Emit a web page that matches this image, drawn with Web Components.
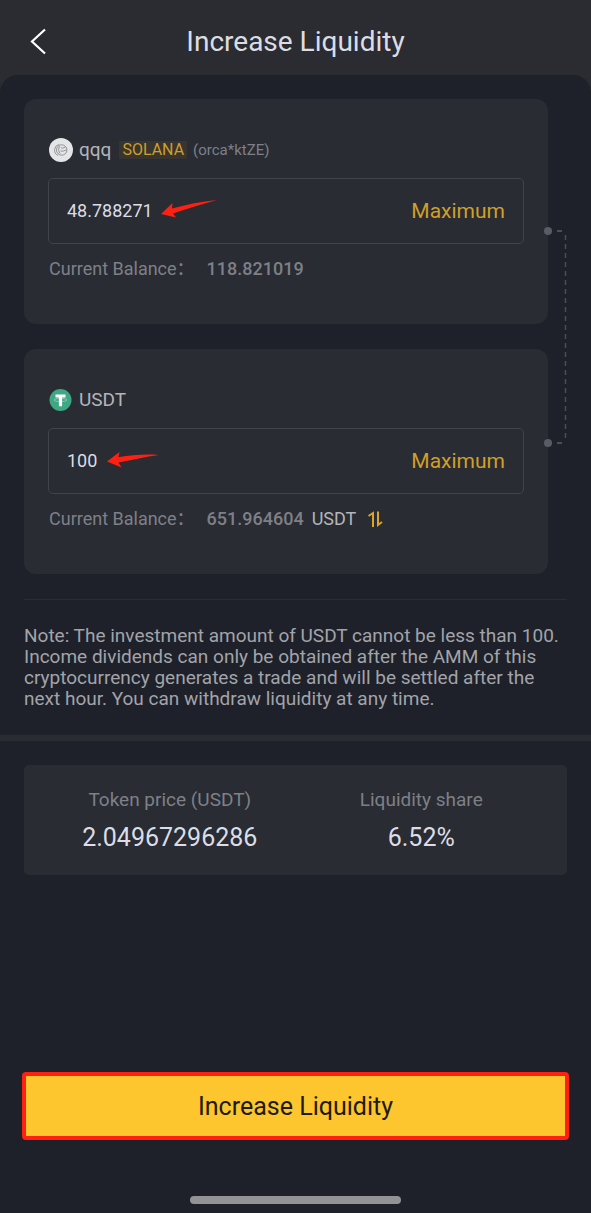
<!DOCTYPE html>
<html lang="en">
<head>
<meta charset="utf-8">
<meta name="viewport" content="width=device-width, initial-scale=1">
<title>Increase Liquidity</title>
<style>
  html, body { margin: 0; background: #1e2129; }
  body { font-family: Roboto, "Noto Sans CJK SC", sans-serif; color: #dcdde3; }
</style>
</head>
<body>
<liquidity-page></liquidity-page>

<template id="t-page">
  <style>
    :host { display: flex; flex-direction: column; min-height: 100vh; background: #2b2c31; }
    main { flex: 1; display: flex; flex-direction: column; background: #1e2129; border-radius: 18px 18px 0 0; padding-top: 24px; }
    .pair { position: relative; display: flex; flex-direction: column; gap: 25px; margin: 0 24px; padding-right: 19px; }
    pair-connector { position: absolute; right: 0; top: 127px; }
    hr { height: 1px; border: 0; margin: 25px 24px; background: #2a2d34; }
    .note { margin: 0 24px; font-size: 19px; line-height: 21px; color: #a2a4aa; }
    .band { height: 6px; margin: 26px 0 24px; background: #292c33; }
    .stats { display: flex; margin: 0 24px; padding: 20px; background: #292c33; border-radius: 5px; }
    stat-item { flex: 1; }
    footer { margin-top: auto; padding: 24px 22px 9px; display: flex; flex-direction: column; align-items: center; gap: 56px; }
    action-button { align-self: stretch; }
    .home { width: 39%; min-width: 120px; max-width: 211px; height: 8px; border-radius: 4px; background: #919394; }
  </style>
  <title-bar>Increase Liquidity</title-bar>
  <main>
    <div class="pair">
      <token-card name="qqq" chain="SOLANA" address="(orca*ktZE)" amount="48.788271" balance="118.821019">
        <svg slot="icon" width="24" height="24" viewBox="0 0 24 24" aria-hidden="true">
          <circle cx="12" cy="12" r="12" fill="#e4e5e7"/>
          <g fill="none" stroke="#7c8086" stroke-width=".8">
            <circle cx="12.700" cy="12" r="5.200"/>
            <path d="M10.300 6.400A5.800 5.800 0 0 0 9 17.400M10.500 8.300c-1.400 2.400-1 5.600.8 7.300M11.800 9.700l1.500.6 3-1.200M11.500 13l2.800.1 3-1.300"/>
          </g>
        </svg>
        <svg slot="mark" width="56" height="20" viewBox="0 0 56 20" aria-hidden="true">
          <path fill="#ff2011" d="M0 14 11.500 3 11 8.600C26 4.500 40 1.500 56 0 41 4.500 26 8.600 12 13.500L15 17.500Z"/>
        </svg>
      </token-card>
      <token-card name="USDT" amount="100" balance="651.964604" unit="USDT" short>
        <svg slot="icon" width="24" height="24" viewBox="0 0 24 24" aria-hidden="true">
          <circle cx="11.500" cy="12" r="11" fill="#3fa783"/>
          <ellipse cx="11.500" cy="12" rx="6.500" ry="1.600" fill="none" stroke="#b5dccd" stroke-width=".6"/>
          <path fill="#fff" d="M6.500 6.500h10v3h-3.400v8.800h-3.200V9.500H6.500Z"/>
        </svg>
        <svg slot="mark" width="52" height="20" viewBox="0 0 52 20" aria-hidden="true">
          <path fill="#ff2011" d="M0 11.500 12.500 2 11.500 7.300C25 5 38 4 52 5 38 7 26 9.600 11.500 12.500L14.500 17.500Z"/>
        </svg>
        <swap-icon slot="swap"></swap-icon>
      </token-card>
      <pair-connector></pair-connector>
    </div>
    <hr>
    <p class="note">Note: The investment amount of USDT cannot be less than 100. Income dividends can only be obtained after the AMM of this cryptocurrency generates a trade and will be settled after the next hour. You can withdraw liquidity at any time.</p>
    <div class="band"></div>
    <section class="stats">
      <stat-item label="Token price (USDT)">2.04967296286</stat-item>
      <stat-item label="Liquidity share">6.52%</stat-item>
    </section>
    <footer>
      <action-button>Increase Liquidity</action-button>
      <div class="home"></div>
    </footer>
  </main>
</template>

<template id="t-title">
  <style>
    :host { display: grid; grid-template-columns: 60px 1fr 60px; align-items: center; height: 75px; padding-top: 8px; box-sizing: border-box; }
    button { display: grid; place-items: center start; height: 40px; padding: 0 0 2px 29px; margin: 0; border: 0; background: none; }
    h1 { margin: 0; font-size: 28px; line-height: 34px; font-weight: 400; text-align: center; color: #dcdde3; }
    svg { display: block; }
  </style>
  <button type="button" aria-label="Back"><svg width="18" height="28" viewBox="0 0 18 28"><path d="M16 2.500 3 14.500 16 26.500" fill="none" stroke="#fff" stroke-width="2.200"/></svg></button>
  <h1><slot></slot></h1>
</template>

<template id="t-card">
  <style>
    :host { display: flex; flex-direction: column; padding: 39px 24px 43px; background: #292c33; border-radius: 12px; }
    .head { display: flex; align-items: center; height: 24px; gap: 6px; padding: 0 1px; margin-bottom: 16px; }
    label { margin-right: 2px; font-size: 19px; line-height: 24px; color: #b3b5ba; }
    .chain { padding: 0 3px; font-size: 16px; line-height: 18px; background: #38342f; color: #cf9f28; }
    .addr { font-size: 15px; line-height: 20px; color: #7e8087; }
    .field { position: relative; display: flex; align-items: center; height: 64px; padding: 0 18px; border: 1px solid #41444c; border-radius: 5px; margin-bottom: 13px; }
    input { flex: 1; min-width: 0; padding: 0; border: 0; outline: 0; background: none; font: inherit; font-size: 18px; line-height: 24px; color: #dcdde6; }
    .max { padding: 0; border: 0; background: none; font: inherit; font-size: 21px; line-height: 24px; color: #cf9f28; }
    .mark { position: absolute; left: 112px; top: 21px; height: 20px; }
    :host([short]) .mark { left: 58px; }
    .balance { display: flex; align-items: center; height: 24px; padding: 0 1px; font-size: 18px; line-height: 24px; color: #7e8087; }
    .value { margin-left: 12px; font-weight: 500; }
    .unit { margin-left: 8px; color: #b3b5ba; }
    [hidden] { display: none; }
  </style>
  <div class="head"><slot name="icon"></slot><label for="amount"></label><span class="chain"></span><span class="addr"></span></div>
  <div class="field"><input id="amount" inputmode="decimal"><button class="max" type="button">Maximum</button><span class="mark"><slot name="mark"></slot></span></div>
  <div class="balance"><span>Current Balance：</span><span class="value"></span><span class="unit"></span><slot name="swap"></slot></div>
</template>

<template id="t-swap">
  <style>
    :host { display: block; margin-left: 12px; }
    button { display: block; padding: 0; border: 0; background: none; }
    svg { display: block; }
  </style>
  <button type="button" aria-label="Switch unit"><svg width="16" height="16" viewBox="0 0 16 16"><path d="M.5 5 5 2v14M10 .5v13.500L14 11" fill="none" stroke="#d9a62a" stroke-width="2"/></svg></button>
</template>

<template id="t-connector">
  <style>:host { display: block; } svg { display: block; }</style>
  <svg width="24" height="222" viewBox="0 0 24 222" aria-hidden="true">
    <g fill="none" stroke="#4b4e55" stroke-width="2">
      <path d="M14 5h5M14 217h5"/>
      <path d="M22.500 9v206" stroke-dasharray="5 4" stroke-width="1.500"/>
    </g>
    <circle cx="5" cy="5" r="4" fill="#595c64"/><circle cx="5" cy="217" r="4" fill="#595c64"/>
  </svg>
</template>

<template id="t-stat">
  <style>
    :host { display: flex; flex-direction: column; align-items: center; gap: 9px; padding-top: 4px; }
    .label { font-size: 19px; line-height: 22px; color: #7e8087; }
    .value { font-size: 25px; line-height: 35px; color: #dcdde6; }
  </style>
  <span class="label"></span><span class="value"><slot></slot></span>
</template>

<template id="t-action">
  <style>
    :host { display: block; }
    button { display: block; width: 100%; padding: 15px 14px 13px; border: 4px solid #ff2011; border-radius: 4px; background: #fec62e; color: #201b12; font: inherit; font-size: 25px; line-height: 32px; }
  </style>
  <button type="button"><slot></slot></button>
</template>

<script>
  class Base extends HTMLElement {
    constructor() {
      super();
      const t = document.getElementById(this.constructor.template);
      this.attachShadow({ mode: "open" }).append(t.content.cloneNode(true));
    }
  }
  class TitleBar extends Base { static template = "t-title"; }
  class SwapIcon extends Base { static template = "t-swap"; }
  class PairConnector extends Base { static template = "t-connector"; }
  class ActionButton extends Base { static template = "t-action"; }
  class StatItem extends Base {
    static template = "t-stat";
    connectedCallback() { this.shadowRoot.querySelector(".label").textContent = this.getAttribute("label"); }
  }
  class TokenCard extends Base {
    static template = "t-card";
    connectedCallback() {
      const root = this.shadowRoot;
      const fill = (selector, attr) => {
        const el = root.querySelector(selector);
        el.textContent = this.getAttribute(attr) || "";
        el.hidden = !this.hasAttribute(attr);
      };
      fill("label", "name");
      fill(".chain", "chain");
      fill(".addr", "address");
      fill(".value", "balance");
      fill(".unit", "unit");
      root.querySelector("input").value = this.getAttribute("amount");
    }
  }
  class LiquidityPage extends Base { static template = "t-page"; }
  customElements.define("title-bar", TitleBar);
  customElements.define("swap-icon", SwapIcon);
  customElements.define("pair-connector", PairConnector);
  customElements.define("action-button", ActionButton);
  customElements.define("stat-item", StatItem);
  customElements.define("token-card", TokenCard);
  customElements.define("liquidity-page", LiquidityPage);
</script>
</body>
</html>
